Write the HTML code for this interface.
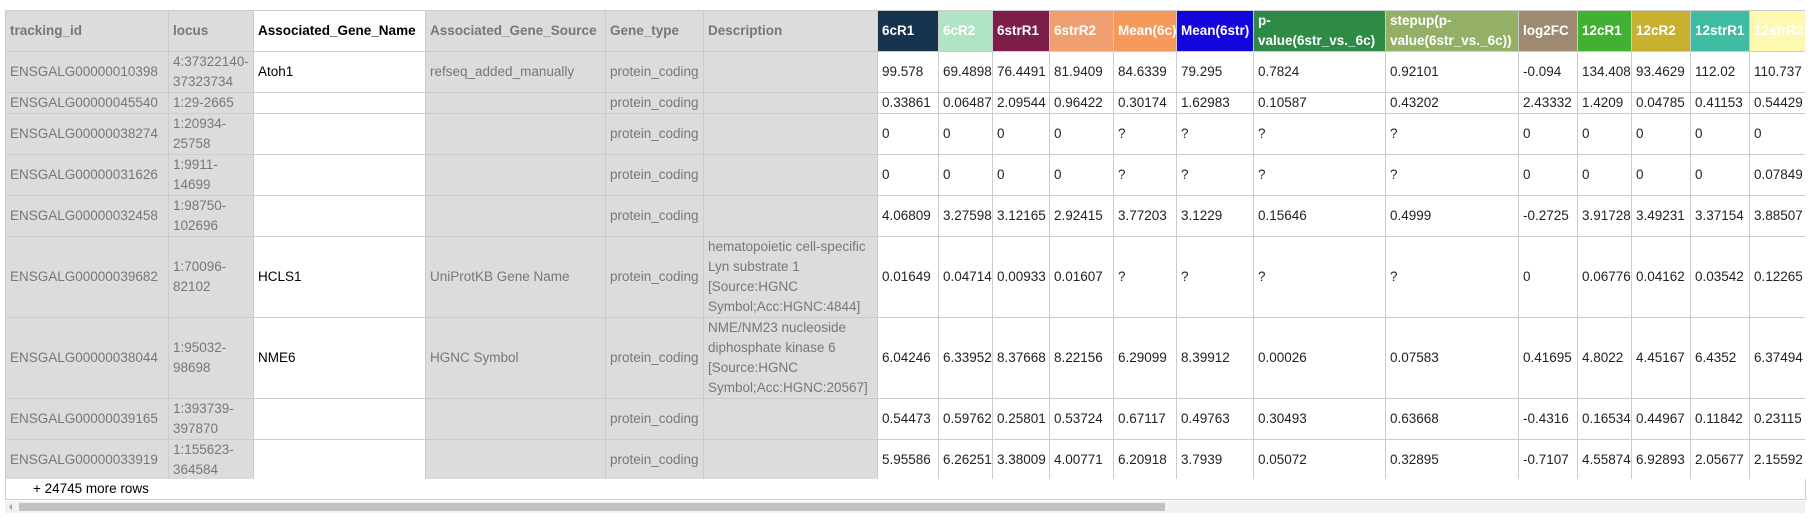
<!DOCTYPE html>
<html><head><meta charset="utf-8"><style>
html,body{margin:0;padding:0;background:#fff;width:1814px;height:522px;overflow:hidden;font-family:"Liberation Sans",Arial,sans-serif;font-size:13.5px}
#wrap{position:absolute;left:5px;top:10px;width:1800px;overflow:hidden}
table{border-collapse:collapse;table-layout:fixed;width:1880px}
td,th{border:1px solid #ccc;padding:0 3px 0 4px;vertical-align:middle;line-height:20px;text-align:left;overflow:hidden;white-space:nowrap}
th{font-weight:bold;color:#fff;height:40px;white-space:normal}
.g{background:#dcdcdc;color:#777}
.w{background:#fff;color:#000}
td.d{white-space:normal}
td{color:#222}
tr.r1 td{height:20px}
tr.r2 td{height:40px}
tr.r4 td{height:79px}
.more{position:absolute;left:5px;top:479px;width:1799px;height:20px;border:1px solid #ccc;border-top:none;background:#fff;color:#000;line-height:20px}
.more span{margin-left:27px}
.sb{position:absolute;left:5px;top:501px;width:1800px;height:12px;background:#f1f1f1}
.sb .t{position:absolute;left:14px;top:2px;width:1146px;height:8px;background:#c1c1c1}
.sb .a{position:absolute;left:4px;top:3px;width:0;height:0;border-top:3px solid transparent;border-bottom:3px solid transparent;border-right:3px solid #a3a3a3}
</style></head><body>
<div id="wrap"><table>
<colgroup>
<col style="width:163px"><col style="width:85px"><col style="width:172px"><col style="width:180px"><col style="width:98px"><col style="width:174px">
<col style="width:61px"><col style="width:54px"><col style="width:57px"><col style="width:64px"><col style="width:63px"><col style="width:77px"><col style="width:132px"><col style="width:133px"><col style="width:59px"><col style="width:54px"><col style="width:59px"><col style="width:59px"><col style="width:80px"><col style="width:80px">
</colgroup>
<tr>
<th class="g">tracking_id</th><th class="g">locus</th><th class="w">Associated_Gene_Name</th><th class="g">Associated_Gene_Source</th><th class="g">Gene_type</th><th class="g">Description</th>
<th style="background:#15324f">6cR1</th><th style="background:#b0e4c4">6cR2</th><th style="background:#7d1d4a">6strR1</th><th style="background:#f0a070">6strR2</th><th style="background:#f59a5b">Mean(6c)</th><th style="background:#1405dc">Mean(6str)</th><th style="background:#2e8b45">p-value(6str_vs._6c)</th><th style="background:#93b066">stepup(p-value(6str_vs._6c))</th><th style="background:#9e8a70">log2FC</th><th style="background:#42b033">12cR1</th><th style="background:#c8b030">12cR2</th><th style="background:#3ebca4">12strR1</th><th style="background:#fef8b0">12strR2</th><th style="background:#888">12</th>
</tr>
<tr class="r2"><td class="g">ENSGALG00000010398</td><td class="g d">4:37322140-37323734</td><td class="w">Atoh1</td><td class="g">refseq_added_manually</td><td class="g">protein_coding</td><td class="g"></td><td>99.578</td><td>69.4898</td><td>76.4491</td><td>81.9409</td><td>84.6339</td><td>79.295</td><td>0.7824</td><td>0.92101</td><td>-0.094</td><td>134.408</td><td>93.4629</td><td>112.02</td><td>110.737</td><td></td></tr>
<tr class="r1"><td class="g">ENSGALG00000045540</td><td class="g">1:29-2665</td><td class="w"></td><td class="g"></td><td class="g">protein_coding</td><td class="g"></td><td>0.33861</td><td>0.06487</td><td>2.09544</td><td>0.96422</td><td>0.30174</td><td>1.62983</td><td>0.10587</td><td>0.43202</td><td>2.43332</td><td>1.4209</td><td>0.04785</td><td>0.41153</td><td>0.54429</td><td></td></tr>
<tr class="r2"><td class="g">ENSGALG00000038274</td><td class="g d">1:20934-25758</td><td class="w"></td><td class="g"></td><td class="g">protein_coding</td><td class="g"></td><td>0</td><td>0</td><td>0</td><td>0</td><td>?</td><td>?</td><td>?</td><td>?</td><td>0</td><td>0</td><td>0</td><td>0</td><td>0</td><td></td></tr>
<tr class="r2"><td class="g">ENSGALG00000031626</td><td class="g d">1:9911-14699</td><td class="w"></td><td class="g"></td><td class="g">protein_coding</td><td class="g"></td><td>0</td><td>0</td><td>0</td><td>0</td><td>?</td><td>?</td><td>?</td><td>?</td><td>0</td><td>0</td><td>0</td><td>0</td><td>0.07849</td><td></td></tr>
<tr class="r2"><td class="g">ENSGALG00000032458</td><td class="g d">1:98750-102696</td><td class="w"></td><td class="g"></td><td class="g">protein_coding</td><td class="g"></td><td>4.06809</td><td>3.27598</td><td>3.12165</td><td>2.92415</td><td>3.77203</td><td>3.1229</td><td>0.15646</td><td>0.4999</td><td>-0.2725</td><td>3.91728</td><td>3.49231</td><td>3.37154</td><td>3.88507</td><td></td></tr>
<tr class="r4"><td class="g">ENSGALG00000039682</td><td class="g d">1:70096-82102</td><td class="w">HCLS1</td><td class="g">UniProtKB Gene Name</td><td class="g">protein_coding</td><td class="g d">hematopoietic cell-specific Lyn substrate 1 [Source:HGNC Symbol;Acc:HGNC:4844]</td><td>0.01649</td><td>0.04714</td><td>0.00933</td><td>0.01607</td><td>?</td><td>?</td><td>?</td><td>?</td><td>0</td><td>0.06776</td><td>0.04162</td><td>0.03542</td><td>0.12265</td><td></td></tr>
<tr class="r4"><td class="g">ENSGALG00000038044</td><td class="g d">1:95032-98698</td><td class="w">NME6</td><td class="g">HGNC Symbol</td><td class="g">protein_coding</td><td class="g d">NME/NM23 nucleoside diphosphate kinase 6 [Source:HGNC Symbol;Acc:HGNC:20567]</td><td>6.04246</td><td>6.33952</td><td>8.37668</td><td>8.22156</td><td>6.29099</td><td>8.39912</td><td>0.00026</td><td>0.07583</td><td>0.41695</td><td>4.8022</td><td>4.45167</td><td>6.4352</td><td>6.37494</td><td></td></tr>
<tr class="r2"><td class="g">ENSGALG00000039165</td><td class="g d">1:393739-397870</td><td class="w"></td><td class="g"></td><td class="g">protein_coding</td><td class="g"></td><td>0.54473</td><td>0.59762</td><td>0.25801</td><td>0.53724</td><td>0.67117</td><td>0.49763</td><td>0.30493</td><td>0.63668</td><td>-0.4316</td><td>0.16534</td><td>0.44967</td><td>0.11842</td><td>0.23115</td><td></td></tr>
<tr class="r2"><td class="g">ENSGALG00000033919</td><td class="g d">1:155623-364584</td><td class="w"></td><td class="g"></td><td class="g">protein_coding</td><td class="g"></td><td>5.95586</td><td>6.26251</td><td>3.38009</td><td>4.00771</td><td>6.20918</td><td>3.7939</td><td>0.05072</td><td>0.32895</td><td>-0.7107</td><td>4.55874</td><td>6.92893</td><td>2.05677</td><td>2.15592</td><td></td></tr>
</table></div>
<div class="more"><span>+ 24745 more rows</span></div>
<div class="sb"><div class="a"></div><div class="t"></div></div>
</body></html>
